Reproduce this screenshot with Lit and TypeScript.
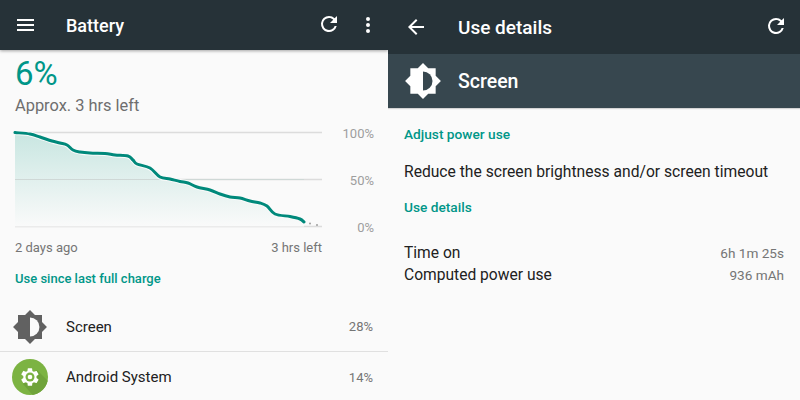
import { LitElement, html, css, svg } from "lit";
import { customElement } from "lit/decorators.js";

const brightness = (fill: string, inner: string, r: number) => svg`
  <path fill=${fill} d="M20 15.31L23.31 12 20 8.69V4h-4.69L12 .69 8.69 4H4v4.69L.69 12 4 15.31V20h4.69L12 23.31 15.31 20H20v-4.69z"/>
  <path fill=${inner} d="M12 ${12 - r}a${r} ${r} 0 0 1 0 ${2 * r}z" />`;

const POINTS: [number, number][] = [
  [0, 0.5], [15, 2], [25, 5], [37, 9], [45, 11], [52, 13], [58, 18], [65, 20], [75, 21], [90, 21.5], [100, 23],
  [113, 24], [118, 28], [122, 32], [135, 36], [145, 45], [155, 47], [165, 49.5], [173, 51], [182, 55], [195, 58],
  [205, 62], [215, 65], [225, 66], [235, 69], [245, 71], [252, 74], [260, 82], [275, 84.5], [285, 87], [289, 90],
];

function smooth(pts: [number, number][]): string {
  let d = `M${pts[0][0]} ${pts[0][1]}`;
  for (let i = 0; i < pts.length - 1; i++) {
    const p0 = pts[Math.max(0, i - 1)];
    const p1 = pts[i];
    const p2 = pts[i + 1];
    const p3 = pts[Math.min(pts.length - 1, i + 2)];
    const c1x = p1[0] + (p2[0] - p0[0]) / 6;
    const c1y = p1[1] + (p2[1] - p0[1]) / 6;
    const c2x = p2[0] - (p3[0] - p1[0]) / 6;
    const c2y = p2[1] - (p3[1] - p1[1]) / 6;
    d += `C${c1x.toFixed(1)} ${c1y.toFixed(1)} ${c2x.toFixed(1)} ${c2y.toFixed(1)} ${p2[0]} ${p2[1]}`;
  }
  return d;
}
const LINE = smooth(POINTS);
const AREA = `${LINE}L289 94.5L0 94.5Z`;

@customElement("app-root")
export class AppRoot extends LitElement {
  static styles = css`
    :host {
      display: block;
      width: 800px;
      height: 400px;
      font-family: Roboto, "Liberation Sans", sans-serif;
      background: #fafafa;
      overflow: hidden;
    }
    .root { display: flex; height: 400px; overflow: hidden; }
    .left { width: 388px; flex: none; display: flex; flex-direction: column; overflow: hidden; }
    .left > * { flex: none; }
    .right { flex: 1; display: flex; flex-direction: column; overflow: hidden; }
    .bar {
      flex: none;
      display: flex;
      align-items: center;
      background: #263238;
      color: #fff;
      font-weight: 500;
    }
    .left .bar { height: 50px; padding: 0 12px 0 15px; font-size: 18px; box-shadow: 0 1px 3px rgba(0,0,0,.35); position: relative; }
    .right .bar { height: 54px; padding: 0 12px 0 16px; font-size: 19px; }
    .icon { flex: none; display: block; }
    .menu { margin-right: 29px; }
    .back { margin-right: 30px; }
    .title { flex: 1; }
    .refresh { margin-bottom: 2px; }
    .left .refresh { margin-right: 19px; }
    .sub {
      flex: none;
      height: 54px;
      background: #37474f;
      color: #fff;
      display: flex;
      align-items: center;
      padding: 0 0 0 16px;
      font-size: 19.5px;
      font-weight: 500;
      box-shadow: 0 1px 1px rgba(0,0,0,.15);
    }
    .sub .icon { margin-right: 16px; }
    .pct { font-size: 33px; line-height: 38px; color: #009688; padding: 5px 15px 0; }
    .approx { font-size: 16.4px; line-height: 20px; color: #6e6e6e; padding: 3px 15px 0; }
    .chart { display: block; margin: 9px 0 0 0; }
    .axis { font-size: 13px; fill: #9e9e9e; }
    .labels {
      display: flex;
      justify-content: space-between;
      width: 307px;
      margin: 6px 0 0 15px;
      font-size: 13px;
      line-height: 16px;
      color: #757575;
    }
    .since { font-size: 13px; font-weight: 500; line-height: 16px; color: #009688; padding: 15px 15px 0; }
    .row { display: flex; align-items: center; padding: 0 15px 0 12px; font-size: 15px; color: #212121; }
    .row .icon { margin-right: 18px; }
    .row .name { flex: 1; }
    .row .val { font-size: 13px; color: #757575; }
    .row1 { height: 49px; margin-top: 15px; border-bottom: 1px solid #e0e0e0; }
    .row2 { height: 50px; }
    .details { padding: 0 16px; }
    .head { font-size: 13.7px; font-weight: 500; line-height: 16px; color: #009688; }
    .adjust { padding-top: 18px; }
    .desc { font-size: 15.65px; line-height: 20px; color: #212121; margin-top: 20px; }
    .use { margin-top: 17px; }
    .stats { margin-top: 27px; }
    .stat { display: flex; justify-content: space-between; align-items: baseline; font-size: 15.6px; line-height: 22px; color: #212121; }
    .stat span:last-child { font-size: 13.6px; color: #757575; }
  `;

  private refresh() {
    return html`<svg class="icon refresh" width="24" height="24" viewBox="0 0 24 24"><path fill="#fff" d="M17.65 6.35A7.95 7.95 0 0 0 12 4a8 8 0 1 0 7.73 10h-2.08A6 6 0 1 1 12 6c1.66 0 3.14.69 4.22 1.78L13 11h7V4l-2.35 2.35z"/></svg>`;
  }

  render() {
    return html`<div class="root">
      <div class="left">
        <div class="bar">
          <svg class="icon menu" width="22" height="22" viewBox="0 0 22 22"><path fill="#fff" d="M2 5h17v2H2zM2 10h17v2H2zM2 15h17v2H2z"/></svg>
          <span class="title">Battery</span>
          ${this.refresh()}
          <svg class="icon" width="16" height="24" viewBox="0 0 16 24"><path fill="#fff" d="M8 8a2 2 0 1 0 0-4 2 2 0 0 0 0 4zm0 2a2 2 0 1 0 0 4 2 2 0 0 0 0-4zm0 6a2 2 0 1 0 0 4 2 2 0 0 0 0-4z"/></svg>
        </div>
        <div class="pct">6%</div>
        <div class="approx">Approx. 3 hrs left</div>
        <svg class="chart" width="388" height="109" viewBox="0 0 388 109">
          <defs><linearGradient id="g" x1="0" y1="0" x2="0" y2="1"><stop offset="0" stop-color="#c8e6e1"/><stop offset="1" stop-color="#fafafa"/></linearGradient></defs>
          <g transform="translate(15,7)">
            <path d="M0 .5H307M0 47.5H307M0 94.5H307" stroke="#dcdcdc" stroke-width="1.4" fill="none"/>
            <path d=${AREA} fill="url(#g)"/>
            <path d="M0 47.5H289" stroke="#cfd8d6" stroke-width="1" fill="none"/>
            <path d=${LINE} fill="none" stroke="#fafafa" stroke-width="5" stroke-linejoin="round"/>
            <path d=${LINE} fill="none" stroke="#00897b" stroke-width="3" stroke-linejoin="round" stroke-linecap="round"/>
            <circle cx="295" cy="91.5" r="1" fill="#9e9e9e"/>
            <circle cx="302" cy="93" r="1" fill="#9e9e9e"/>
          </g>
          <text class="axis" x="374" y="13" text-anchor="end">100%</text>
          <text class="axis" x="374" y="60" text-anchor="end">50%</text>
          <text class="axis" x="374" y="107" text-anchor="end">0%</text>
        </svg>
        <div class="labels"><span>2 days ago</span><span>3 hrs left</span></div>
        <div class="since">Use since last full charge</div>
        <div class="row row1">
          <svg class="icon" width="36" height="36" viewBox="0 0 24 24">${brightness("#616161", "#fafafa", 6.3)}</svg>
          <span class="name">Screen</span><span class="val">28%</span>
        </div>
        <div class="row row2">
          <svg class="icon" width="36" height="36" viewBox="0 0 36 36">
            <defs><clipPath id="c"><circle cx="18" cy="18" r="18"/></clipPath></defs>
            <circle cx="18" cy="18" r="18" fill="#7cb342"/>
            <path clip-path="url(#c)" fill="#6fa33a" d="M25 11L40 26V40H24L11 25z"/>
            <g transform="translate(18 18) scale(.8) translate(-18 -18)">
              <path fill="#fff" d="M26.1 19.1a8 8 0 0 0 0-2.2l2.3-1.8a.6.6 0 0 0 .1-.7l-2.2-3.8a.6.6 0 0 0-.7-.2l-2.7 1.1a8 8 0 0 0-1.9-1.1l-.4-2.9a.5.5 0 0 0-.5-.5h-4.4a.5.5 0 0 0-.5.5l-.4 2.9a8 8 0 0 0-1.9 1.1l-2.7-1.1a.5.5 0 0 0-.7.2l-2.2 3.8a.5.5 0 0 0 .1.7l2.3 1.8a8 8 0 0 0 0 2.2l-2.3 1.8a.6.6 0 0 0-.1.7l2.2 3.8c.1.2.4.3.7.2l2.7-1.1a8 8 0 0 0 1.9 1.1l.4 2.9c0 .3.2.5.5.5h4.4c.3 0 .5-.2.5-.5l.4-2.9a8 8 0 0 0 1.9-1.1l2.7 1.1c.3.1.6 0 .7-.2l2.2-3.8a.6.6 0 0 0-.1-.7z"/>
              <circle cx="18" cy="18" r="5.6" fill="#7cb342"/>
              <circle cx="18" cy="18" r="2.9" fill="#fff"/>
            </g>
          </svg>
          <span class="name">Android System</span><span class="val">14%</span>
        </div>
      </div>
      <div class="right">
        <div class="bar">
          <svg class="icon back" width="24" height="24" viewBox="0 0 24 24"><path fill="#fff" d="M20 11H7.83l5.59-5.59L12 4l-8 8 8 8 1.41-1.41L7.83 13H20v-2z"/></svg>
          <span class="title">Use details</span>
          ${this.refresh()}
        </div>
        <div class="sub">
          <svg class="icon" width="38" height="38" viewBox="0 0 24 24">${brightness("#fff", "#37474f", 6)}</svg>
          <span>Screen</span>
        </div>
        <div class="details">
          <div class="head adjust">Adjust power use</div>
          <div class="desc">Reduce the screen brightness and/or screen timeout</div>
          <div class="head use">Use details</div>
          <div class="stats">
            <div class="stat"><span>Time on</span><span>6h 1m 25s</span></div>
            <div class="stat"><span>Computed power use</span><span>936 mAh</span></div>
          </div>
        </div>
      </div>
    </div>`;
  }
}
